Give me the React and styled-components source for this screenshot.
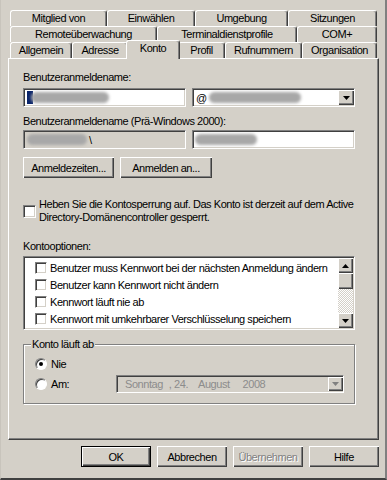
import React from "react";
import styled, { createGlobalStyle, css } from "styled-components";

const GlobalStyle = createGlobalStyle`
  html, body {
    margin: 0;
    padding: 0;
    background: #d4d0c8;
  }
  body {
    font-family: "Liberation Sans", Arial, sans-serif;
    font-size: 11px;
    letter-spacing: -0.45px;
    color: #000;
  }
`;

const raised = css`
  box-shadow: inset 1px 1px #fff, inset -1px -1px #404040, inset -2px -2px #808080;
`;

const sunken = css`
  box-sizing: border-box;
  border: 1px solid;
  border-color: #808080 #fff #fff #808080;
  box-shadow: inset 1px 1px #404040, inset -1px -1px #d4d0c8;
`;

const Window = styled.div`
  width: 387px;
  height: 480px;
  box-sizing: border-box;
  background: #d4d0c8;
  padding-top: 10px;
  border-left: 1px solid #c8c4bc;
  border-right: 2px solid #808080;
  border-bottom: 2px solid #404040;
`;

const TabStrip = styled.div`
  margin-left: 9px;
  width: 367px;
  display: flex;
  flex-direction: column;
`;

const TabRow = styled.div`
  display: flex;
  height: 16px;
`;

const Tab = styled.div`
  position: relative;
  box-sizing: border-box;
  width: ${(p) => p.$w}px;
  height: 16px;
  display: flex;
  align-items: center;
  justify-content: center;
  border-top: 1px solid #fff;
  border-left: 1px solid #fff;
  border-right: 1px solid #404040;
  box-shadow: inset -1px 0 #808080;
  border-radius: 3px 3px 0 0;
  background: #d4d0c8;
  white-space: nowrap;
  padding-bottom: 1px;
  ${(p) =>
    p.$active &&
    css`
      z-index: 2;
      width: ${p.$w + 4}px;
      height: 19px;
      margin: -2px -2px -1px;
      padding-bottom: 4px;
    `}
`;

const Panel = styled.div`
  margin-left: 7px;
  width: 371px;
  height: 382px;
  box-sizing: border-box;
  border-top: 1px solid #fff;
  border-left: 1px solid #fff;
  border-right: 1px solid #404040;
  border-bottom: 1px solid #404040;
  box-shadow: inset -1px -1px #808080;
  padding: 12px 0 0 14px;
  display: flex;
  flex-direction: column;
`;

const FieldLabel = styled.div`
  line-height: 13px;
  margin-top: ${(p) => p.$top || 0}px;
  margin-bottom: ${(p) => p.$bottom || 0}px;
`;

const Row = styled.div`
  display: flex;
  gap: ${(p) => p.$gap || 6}px;
  margin-top: ${(p) => p.$top || 0}px;
`;

const TextBox = styled.div`
  ${sunken};
  width: 163px;
  height: 19px;
  display: flex;
  align-items: center;
  padding-left: 3px;
  background: ${(p) => (p.$disabled ? "#d4d0c8" : "#fff")};
  position: relative;
  overflow: hidden;
`;

const Blur = styled.span`
  display: inline-block;
  width: ${(p) => p.$w}px;
  height: 11px;
  margin-left: ${(p) => p.$left || 0}px;
  background: #a8a8a8;
  border-radius: 6px;
  filter: blur(1.5px);
  flex-shrink: 0;
`;

const Selection = styled.span`
  display: inline-block;
  width: 6px;
  height: 13px;
  background: #0a246a;
  flex-shrink: 0;
`;

const Glyph = styled.span`
  color: ${(p) => p.$color || "inherit"};
  margin-left: ${(p) => p.$left || 0}px;
  white-space: pre;
`;

const DropButton = styled.div`
  margin-left: auto;
  width: 16px;
  height: 15px;
  flex-shrink: 0;
  background: #d4d0c8;
  display: flex;
  align-items: center;
  justify-content: center;
  ${raised};
`;

const Button = styled.button`
  box-sizing: border-box;
  width: ${(p) => p.$w || 70}px;
  height: 21px;
  padding: 0;
  background: #d4d0c8;
  border: none;
  font-family: "Liberation Sans", Arial, sans-serif;
  font-size: 11px;
  letter-spacing: -0.45px;
  color: ${(p) => (p.$disabled ? "#808080" : "#000")};
  text-shadow: ${(p) => (p.$disabled ? "1px 1px #fff" : "none")};
  ${raised};
  ${(p) =>
    p.$default &&
    css`
      border: 1px solid #000;
    `}
`;

const CheckLine = styled.label`
  display: flex;
  align-items: center;
  gap: 3px;
  margin-top: ${(p) => p.$top || 0}px;
  line-height: 13px;
`;

const CheckBox = styled.span`
  ${sunken};
  width: ${(p) => p.$size || 13}px;
  height: ${(p) => p.$size || 13}px;
  background: #fff;
  flex-shrink: 0;
`;

const ListBox = styled.div`
  ${sunken};
  width: 332px;
  height: 74px;
  margin-top: 3px;
  background: #fff;
  display: flex;
  padding: 1px;
`;

const ListItems = styled.div`
  flex: 1;
  display: flex;
  flex-direction: column;
  padding: 1px 0 0 10px;
`;

const ListItem = styled.div`
  height: 17px;
  display: flex;
  align-items: center;
  gap: 3px;
  white-space: nowrap;
`;

const ScrollBar = styled.div`
  width: 15px;
  display: flex;
  flex-direction: column;
`;

const ScrollButton = styled.div`
  height: ${(p) => p.$h || 15}px;
  background: #d4d0c8;
  display: flex;
  align-items: center;
  justify-content: center;
  ${raised};
`;

const ScrollTrack = styled.div`
  flex: 1;
  background: repeating-conic-gradient(#fff 0 25%, #d4d0c8 0 50%) 0 0 / 2px 2px;
`;

const GroupBox = styled.fieldset`
  box-sizing: border-box;
  width: 332px;
  height: 66px;
  margin: 8px 0 0;
  padding: 4px 10px 0 11px;
  border: 1px solid #808080;
  box-shadow: inset 1px 1px #fff, 1px 1px #fff;
  display: flex;
  flex-direction: column;
`;

const Legend = styled.legend`
  padding: 0 1px;
  margin-left: -4px;
  line-height: 13px;
  background: #d4d0c8;
`;

const RadioRow = styled.div`
  display: flex;
  align-items: center;
  height: ${(p) => p.$h || 20}px;
`;

const Radio = styled.span`
  box-sizing: border-box;
  width: 12px;
  height: 12px;
  border-radius: 50%;
  background: #fff;
  border: 1px solid;
  border-color: #808080 #fff #fff #808080;
  box-shadow: inset 1px 1px #404040;
  display: flex;
  align-items: center;
  justify-content: center;
  flex-shrink: 0;
  &::after {
    content: "";
    width: 4px;
    height: 4px;
    border-radius: 50%;
    background: ${(p) => (p.$checked ? "#000" : "transparent")};
  }
`;

const RadioText = styled.span`
  margin-left: 4px;
`;

const DatePicker = styled.div`
  ${sunken};
  margin-left: auto;
  width: 228px;
  height: 18px;
  background: #d4d0c8;
  display: flex;
  align-items: center;
  padding-left: 8px;
  color: #8c8c8c;
`;

const DateDrop = styled(DropButton)`
  height: 14px;
  width: 15px;
`;

const Footer = styled.div`
  margin: 6px 0 0 7px;
  width: 371px;
  display: flex;
  justify-content: flex-end;
  gap: 6px;
`;

const Arrow = ({ up, color = "#000" }) => (
  <svg width="7" height="4" viewBox="0 0 7 4">
    <path d={up ? "M3.5 0 L7 4 L0 4 Z" : "M0 0 L7 0 L3.5 4 Z"} fill={color} />
  </svg>
);

const tabRows = [
  [
    ["Mitglied von", 97],
    ["Einwählen", 88],
    ["Umgebung", 93],
    ["Sitzungen", 89],
  ],
  [
    ["Remoteüberwachung", 147],
    ["Terminaldienstprofile", 140],
    ["COM+", 80],
  ],
  [
    ["Allgemein", 62],
    ["Adresse", 56],
    ["Konto", 50, true],
    ["Profil", 47],
    ["Rufnummern", 77],
    ["Organisation", 75],
  ],
];

const options = [
  "Benutzer muss Kennwort bei der nächsten Anmeldung ändern",
  "Benutzer kann Kennwort nicht ändern",
  "Kennwort läuft nie ab",
  "Kennwort mit umkehrbarer Verschlüsselung speichern",
];

export default function App() {
  return (
    <Window>
      <GlobalStyle />
      <TabStrip>
        {tabRows.map((row, i) => (
          <TabRow key={i}>
            {row.map(([label, w, active]) => (
              <Tab key={label} $w={w} $active={active}>
                {label}
              </Tab>
            ))}
          </TabRow>
        ))}
      </TabStrip>

      <Panel>
        <FieldLabel $bottom={4}>Benutzeranmeldename:</FieldLabel>
        <Row>
          <TextBox>
            <Selection />
            <Blur $w={78} $left={-2} />
          </TextBox>
          <TextBox>
            <Glyph>@</Glyph>
            <Blur $w={92} $left={2} />
            <DropButton>
              <Arrow />
            </DropButton>
          </TextBox>
        </Row>

        <FieldLabel $top={8}>Benutzeranmeldename (Prä-Windows 2000):</FieldLabel>
        <Row $top={2}>
          <TextBox $disabled>
            <Blur $w={60} />
            <Glyph $left={2}>\</Glyph>
          </TextBox>
          <TextBox>
            <Blur $w={62} $left={-1} />
          </TextBox>
        </Row>

        <Row $top={8}>
          <Button $w={91}>Anmeldezeiten...</Button>
          <Button $w={92}>Anmelden an...</Button>
        </Row>

        <CheckLine $top={20}>
          <CheckBox />
          <span>
            Heben Sie die Kontosperrung auf. Das Konto ist derzeit auf dem Active
            <br />
            Directory-Domänencontroller gesperrt.
          </span>
        </CheckLine>

        <FieldLabel $top={16}>Kontooptionen:</FieldLabel>
        <ListBox>
          <ListItems>
            {options.map((o) => (
              <ListItem key={o}>
                <CheckBox $size={12} />
                {o}
              </ListItem>
            ))}
          </ListItems>
          <ScrollBar>
            <ScrollButton>
              <Arrow up />
            </ScrollButton>
            <ScrollButton $h={16} />
            <ScrollTrack />
            <ScrollButton>
              <Arrow />
            </ScrollButton>
          </ScrollBar>
        </ListBox>

        <GroupBox>
          <Legend>Konto läuft ab</Legend>
          <RadioRow $h={18}>
            <Radio $checked />
            <RadioText>Nie</RadioText>
          </RadioRow>
          <RadioRow $h={22}>
            <Radio />
            <RadioText>Am:</RadioText>
            <DatePicker>
              <Glyph>Sonntag</Glyph>
              <Glyph $left={6}>, 24.</Glyph>
              <Glyph $left={10}>August</Glyph>
              <Glyph $left={13}>2008</Glyph>
              <DateDrop>
                <Arrow color="#808080" />
              </DateDrop>
            </DatePicker>
          </RadioRow>
        </GroupBox>
      </Panel>

      <Footer>
        <Button $default>OK</Button>
        <Button>Abbrechen</Button>
        <Button $disabled>Übernehmen</Button>
        <Button>Hilfe</Button>
      </Footer>
    </Window>
  );
}
